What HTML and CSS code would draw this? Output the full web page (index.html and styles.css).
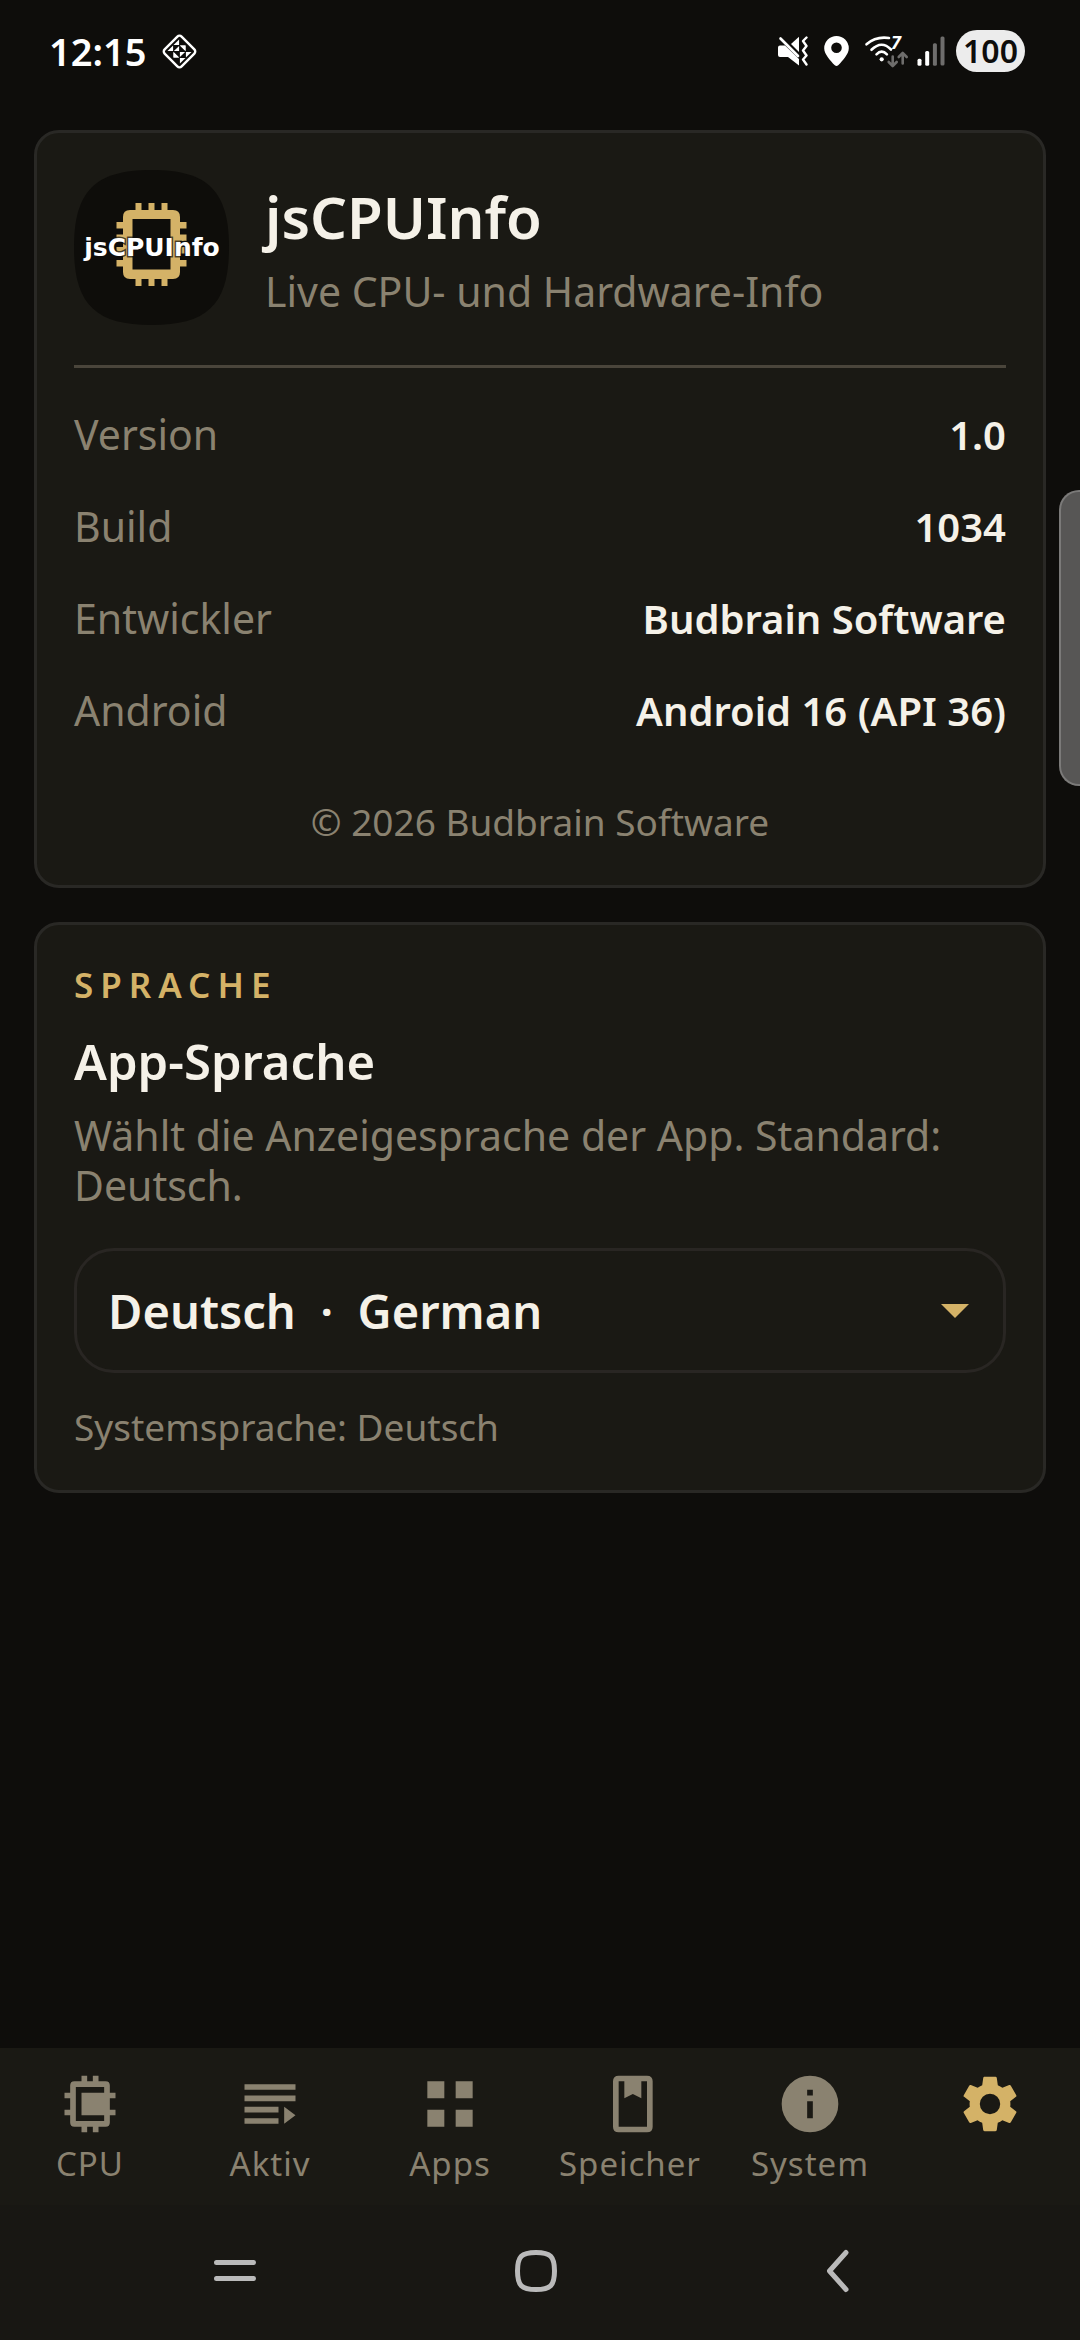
FILE: index.html
```
<!DOCTYPE html>
<html lang="de">
<head>
    <meta charset="UTF-8">
    <meta name="viewport" content="width=device-width, initial-scale=1.0">
    <title>jsCPUInfo</title>
    <link rel="stylesheet" href="styles.css">
</head>
<body>
    <!-- Status bar -->
    <header class="status-bar">
        <span class="clock">12:15</span>
        <svg width="37" height="37" viewBox="0 0 37 37" aria-hidden="true">
            <rect x="6.5" y="6.5" width="24" height="24" rx="3" transform="rotate(45 18.5 18.5)" fill="none" stroke="#fff" stroke-width="2.4"/>
            <g fill="#fff" transform="translate(18.5 18.5)">
                <path d="M-.4-12v5.600h-5.600zM-12-.4l5.600-5.600v5.600zM.4-6h5.600v5.600zM-5.600-.4h5.200v-5.200z"/>
                <path d="M-.4-12v5.600h-5.600zM-12-.4l5.600-5.600v5.600zM.4-6h5.600v5.600zM-5.600-.4h5.200v-5.200z" transform="rotate(180)"/>
                <path d="M-6 .4v5.600h5.600zM6-.4v-5.600H.4z"/>
            </g>
        </svg>
        <div class="status-icons">
            <svg width="30" height="30" viewBox="0 0 30 30" aria-hidden="true">
                <path d="M2 9.500h5L21 23v6.500L10 21H2q-2 0-2-2v-7.500q0-2 2-2z" fill="#fff"/>
                <path d="M21 .7V16l-8-8z" fill="#fff"/>
                <path d="M2.500 2.500 20 20" stroke="#fff" stroke-width="2.600" stroke-linecap="round"/>
                <path d="m28.500 1.500-3.500 3.500 3.500 5-3.500 4.500 3.500 5-3.500 4 3.500 5" fill="none" stroke="#fff" stroke-width="2.400" stroke-linecap="round" stroke-linejoin="round"/>
            </svg>
            <svg width="25" height="30" viewBox="0 0 25 30" aria-hidden="true">
                <path fill="#fff" fill-rule="evenodd" d="M12.500 0A12.300 12.300 0 0 0 .2 12.300C.2 18 6 24.500 10.800 29.300q1.700 1.400 3.400 0C19 24.500 24.800 18 24.800 12.300A12.300 12.300 0 0 0 12.500 0zm0 6.500a5.300 5.300 0 1 1 0 10.600 5.300 5.300 0 0 1 0-10.600z"/>
            </svg>
            <svg class="wifi" width="43" height="32" viewBox="0 0 43 32" aria-hidden="true">
                <g fill="none" stroke="#fff" stroke-width="2.600" stroke-linecap="round">
                    <path d="M1.500 9.300Q11 1 24 3"/>
                    <path d="M6.500 14.800q10.200-10 19.500-.3"/>
                    <path d="M11.500 19.300q5.200-5.300 10.400 0"/>
                </g>
                <circle cx="16.700" cy="24.300" r="2.100" fill="#fff"/>
                <text x="26" y="14" fill="#fff">7</text>
                <path d="M27.700 21.500v9m-4-3.500 4 4 4-4M37.700 28.500v-10m-4 3.500 4-4 4 4" fill="none" stroke="#6e6d6c" stroke-width="2.600" stroke-linecap="round" stroke-linejoin="round"/>
            </svg>
            <svg class="signal" width="28" height="30" viewBox="0 0 28 30" aria-hidden="true">
                <rect x=".5" y="22.700" width="4" height="7" rx="1.500" fill="#fff"/>
                <rect x="8.200" y="15" width="4" height="14.700" rx="1.500" fill="#fff"/>
                <rect x="15.900" y="7.300" width="4" height="22.400" rx="1.500" fill="#6e6d6c"/>
                <rect x="23.500" y=".6" width="4" height="29" rx="1.500" fill="#6e6d6c"/>
            </svg>
            <span class="battery">100</span>
        </div>
    </header>

    <main>
        <!-- App info -->
        <section class="card">
            <div class="app-header">
                <svg class="app-icon" viewBox="0 0 155 155" role="img" aria-label="jsCPUInfo Logo">
                    <path fill="#0e0d0a" d="M77.500 0C134 0 155 21 155 77.500S134 155 77.500 155 0 134 0 77.500 21 0 77.500 0z"/>
                    <path fill="#d4b267" fill-rule="evenodd" d="M56 40h43q7 0 7 7v55q0 7-7 7H56q-7 0-7-7V47q0-7 7-7zm2.500 9v50.500h38V49z"/>
                    <path fill="#d4b267" d="M61.500 33h6v8h-6zM74.500 33h6v8h-6zM87.500 33h6v8h-6zM61.500 108h6v8h-6zM74.500 108h6v8h-6zM87.500 108h6v8h-6zM42.500 52H50v6.500h-7.500zM42.500 64.500H50V71h-7.500zM42.500 77H50v6.500h-7.500zM42.500 90H50v6.500h-7.500zM105 52h7.500v6.500H105zM105 64.500h7.500V71H105zM105 77h7.500v6.500H105zM105 90h7.500v6.500H105z"/>
                    <text class="logo-text" x="78" y="86" text-anchor="middle">jsCPUInfo</text>
                </svg>
                <div class="app-title">
                    <h1>jsCPUInfo</h1>
                    <p>Live CPU- und Hardware-Info</p>
                </div>
            </div>

            <dl class="info-list">
                <div><dt>Version</dt><dd>1.0</dd></div>
                <div><dt>Build</dt><dd>1034</dd></div>
                <div><dt>Entwickler</dt><dd>Budbrain Software</dd></div>
                <div><dt>Android</dt><dd>Android 16 (API 36)</dd></div>
            </dl>

            <p class="copyright">© 2026 Budbrain Software</p>
        </section>

        <!-- Language -->
        <section class="card">
            <h2>SPRACHE</h2>
            <label class="setting-title" for="language">App-Sprache</label>
            <p class="description">Wählt die Anzeigesprache der App. Standard: Deutsch.</p>
            <div class="select-box">
                <select id="language" name="language">
                    <option value="de" selected>Deutsch&nbsp;&nbsp;·&nbsp;&nbsp;German</option>
                    <option value="en">English&nbsp;&nbsp;·&nbsp;&nbsp;English</option>
                </select>
                <svg class="arrow" width="28" height="14" viewBox="0 0 28 14" aria-hidden="true">
                    <path d="M0 0h28L14 14z" fill="#d4b267"/>
                </svg>
            </div>
            <p class="system-language">Systemsprache: Deutsch</p>
        </section>
    </main>

    <!-- Bottom tabs -->
    <nav class="tabs">
        <a href="#cpu">
            <svg viewBox="0 0 24 24" aria-hidden="true"><path fill-rule="evenodd" d="M6.500 4H9V2h2v2h2V2h2v2h2.500Q19 4 19 5.500V8h2v2h-2v4h2v2h-2v2.500q0 1.500-1.500 1.500H15v2h-2v-2h-2v2H9v-2H6.500Q5 20 5 18.500V16H3v-2h2v-4H3V8h2V5.500Q5 4 6.500 4zM7 6v12h10v-2H9V8h8V6z"/></svg>
            <span>CPU</span>
        </a>
        <a href="#aktiv">
            <svg viewBox="0 0 24 24" aria-hidden="true"><path d="M3 5h18v2H3zM3 9h18v2H3zM3 13h12v2H3zM3 17h12v2H3zM17 13l4 3-4 3z"/></svg>
            <span>Aktiv</span>
        </a>
        <a href="#apps">
            <svg viewBox="0 0 24 24" aria-hidden="true"><path d="M4 4h6v6H4zM14 4h6v6h-6zM4 14h6v6H4zM14 14h6v6h-6z"/></svg>
            <span>Apps</span>
        </a>
        <a href="#speicher">
            <svg viewBox="0 0 24 24" aria-hidden="true"><path fill-rule="evenodd" d="M8 2h10q2 0 2 2v16q0 2-2 2H8q-2 0-2-2V4q0-2 2-2zm0 2v16h10V4h-2v6l-3-1.500L10 10V4z"/></svg>
            <span>Speicher</span>
        </a>
        <a href="#system">
            <svg viewBox="0 0 24 24" aria-hidden="true"><path fill-rule="evenodd" d="M12 2a10 10 0 1 0 0 20 10 10 0 0 0 0-20zm-1 5h2v2h-2zm0 4h2v6h-2z"/></svg>
            <span>System</span>
        </a>
        <a href="#einstellungen" class="active" aria-label="Einstellungen">
            <svg viewBox="0 0 24 24" aria-hidden="true"><path d="M19.140 12.940c.04-.3.06-.61.06-.94 0-.32-.02-.64-.07-.94l2.030-1.580a.49.49 0 0 0 .12-.61l-1.920-3.320a.488.488 0 0 0-.59-.22l-2.390.96c-.5-.38-1.030-.7-1.620-.94l-.36-2.540a.484.484 0 0 0-.48-.41h-3.840c-.24 0-.43.17-.47.41l-.36 2.540c-.59.24-1.130.57-1.620.94l-2.390-.96c-.22-.08-.47 0-.59.22L2.740 8.870c-.12.21-.08.47.12.61l2.030 1.580c-.05.3-.09.63-.09.94s.02.64.07.94l-2.030 1.580a.49.49 0 0 0-.12.61l1.920 3.320c.12.22.37.29.59.22l2.390-.96c.5.38 1.030.7 1.620.94l.36 2.540c.05.24.24.41.48.41h3.840c.24 0 .44-.17.47-.41l.36-2.540c.59-.24 1.130-.56 1.620-.94l2.390.96c.22.08.47 0 .59-.22l1.920-3.320c.12-.22.07-.47-.12-.61l-2.010-1.580zM12 15.600a3.600 3.600 0 1 1 0-7.200 3.600 3.600 0 0 1 0 7.200z"/></svg>
        </a>
    </nav>

    <!-- System navigation -->
    <div class="system-nav">
        <button type="button" aria-label="Letzte Apps">
            <svg width="44" height="44" viewBox="0 0 44 44"><path d="M3.500 13.500h37M3.500 29.500h37"/></svg>
        </button>
        <button type="button" aria-label="Startseite">
            <svg width="44" height="44" viewBox="0 0 44 44"><path d="M22 3.500c14.500 0 18.500 4 18.500 18.500S36.500 40.500 22 40.500 3.500 36.500 3.500 22 7.500 3.500 22 3.500z"/></svg>
        </button>
        <button type="button" aria-label="Zurück">
            <svg width="44" height="44" viewBox="0 0 44 44"><path d="M31 3.500 14.500 22 31 40.500"/></svg>
        </button>
    </div>

    <div class="edge-handle"></div>
</body>
</html>
```

FILE: styles.css
```
* {
    box-sizing: border-box;
}

body {
    display: flex;
    flex-direction: column;
    min-height: 100vh;
    margin: 0;
    background-color: #0e0d0b;
    color: #f5f1e8;
    font-family: "Noto Sans", sans-serif;
}

h1, h2, p, dl, dd {
    margin: 0;
}

svg {
    display: block;
    flex: none;
}

/* Status bar */
.status-bar {
    display: flex;
    align-items: center;
    height: 102px;
    padding: 0 55px 0 49px;
    color: #fff;
}

.clock {
    margin-right: 15px;
    font-size: 38px;
    font-weight: 600;
    line-height: 52px;
}

.status-icons {
    display: flex;
    align-items: center;
    gap: 16px;
    margin-left: auto;
}

.wifi {
    overflow: visible;
}

.wifi text {
    font-size: 18px;
    font-style: italic;
    font-weight: 700;
}

.signal {
    margin: 0 -5px 0 -7px;
}

.battery {
    width: 69px;
    border-radius: 21px;
    background-color: #ececec;
    color: #0e0d0b;
    font-size: 32px;
    font-weight: 600;
    line-height: 42px;
    text-align: center;
}

/* Cards */
main {
    display: flex;
    flex: 1;
    flex-direction: column;
    gap: 34px;
    padding: 28px 34px 34px;
}

.card {
    padding: 37px;
    border: 3px solid #292825;
    border-radius: 25px;
    background-color: #1a1914;
}

.app-header {
    display: flex;
    align-items: center;
    gap: 36px;
    padding-bottom: 40px;
    border-bottom: 3px solid #4a453b;
}

.app-icon {
    width: 155px;
    height: 155px;
}

.logo-text {
    fill: #fff;
    font-family: "DejaVu Sans", sans-serif;
    font-size: 25px;
    font-weight: 700;
    paint-order: stroke;
    stroke: rgba(14, 13, 10, 0.7);
    stroke-width: 3px;
}

.app-title {
    padding-top: 6px;
}

h1 {
    margin-bottom: 8px;
    font-size: 58px;
    font-weight: 600;
    line-height: 72px;
}

.app-title p {
    color: #8a8270;
    font-size: 41px;
    line-height: 60px;
}

.info-list {
    padding: 20px 0 40px;
}

.info-list div {
    display: flex;
    align-items: baseline;
    justify-content: space-between;
    height: 92px;
    line-height: 92px;
}

dt {
    color: #8a8270;
    font-size: 41px;
}

dd {
    font-size: 40px;
    font-weight: 600;
}

.copyright, .system-language {
    color: #8a8270;
    font-size: 37px;
    line-height: 52px;
}

.copyright {
    text-align: center;
}

/* Language */
h2 {
    margin-bottom: 20px;
    color: #d4b267;
    font-size: 35px;
    font-weight: 600;
    letter-spacing: 7px;
    line-height: 46px;
}

.setting-title {
    display: block;
    margin-bottom: 16px;
    font-size: 49px;
    font-weight: 600;
    line-height: 66px;
}

.description {
    color: #8a8270;
    font-size: 41px;
    line-height: 50px;
}

.select-box {
    position: relative;
    margin: 38px 0 28px;
}

select {
    display: block;
    width: 100%;
    height: 125px;
    padding: 0 96px 0 31px;
    border: 3px solid #292623;
    border-radius: 40px;
    appearance: none;
    background-color: transparent;
    color: #f5f1e8;
    font-family: inherit;
    font-size: 47px;
    font-weight: 600;
}

.arrow {
    position: absolute;
    top: 56px;
    right: 37px;
    pointer-events: none;
}

/* Bottom tabs */
.tabs {
    display: flex;
    height: 157px;
    padding-top: 22px;
    background-color: #1a1914;
}

.tabs a {
    display: flex;
    flex: 1 1 0;
    flex-direction: column;
    align-items: center;
    gap: 4px;
    min-width: 0;
    color: #8a8270;
    font-size: 33px;
    letter-spacing: 1px;
    line-height: 44px;
    text-decoration: none;
}

.tabs svg {
    width: 68px;
    height: 68px;
    fill: currentColor;
}

.tabs .active {
    color: #d4b267;
}

/* System navigation */
.system-nav {
    display: flex;
    height: 135px;
    padding: 0 92px 4px 84px;
    background-color: #181713;
}

.system-nav button {
    display: flex;
    flex: 1;
    align-items: center;
    justify-content: center;
    padding: 0;
    border: none;
    background: none;
}

.system-nav svg {
    fill: none;
    stroke: #bababa;
    stroke-width: 5px;
    stroke-linecap: round;
    stroke-linejoin: round;
}

.edge-handle {
    position: fixed;
    top: 490px;
    right: 0;
    width: 21px;
    height: 296px;
    border: 2px solid #7b7a79;
    border-right: none;
    border-radius: 20px 0 0 20px;
    background-color: #575655;
}
```
